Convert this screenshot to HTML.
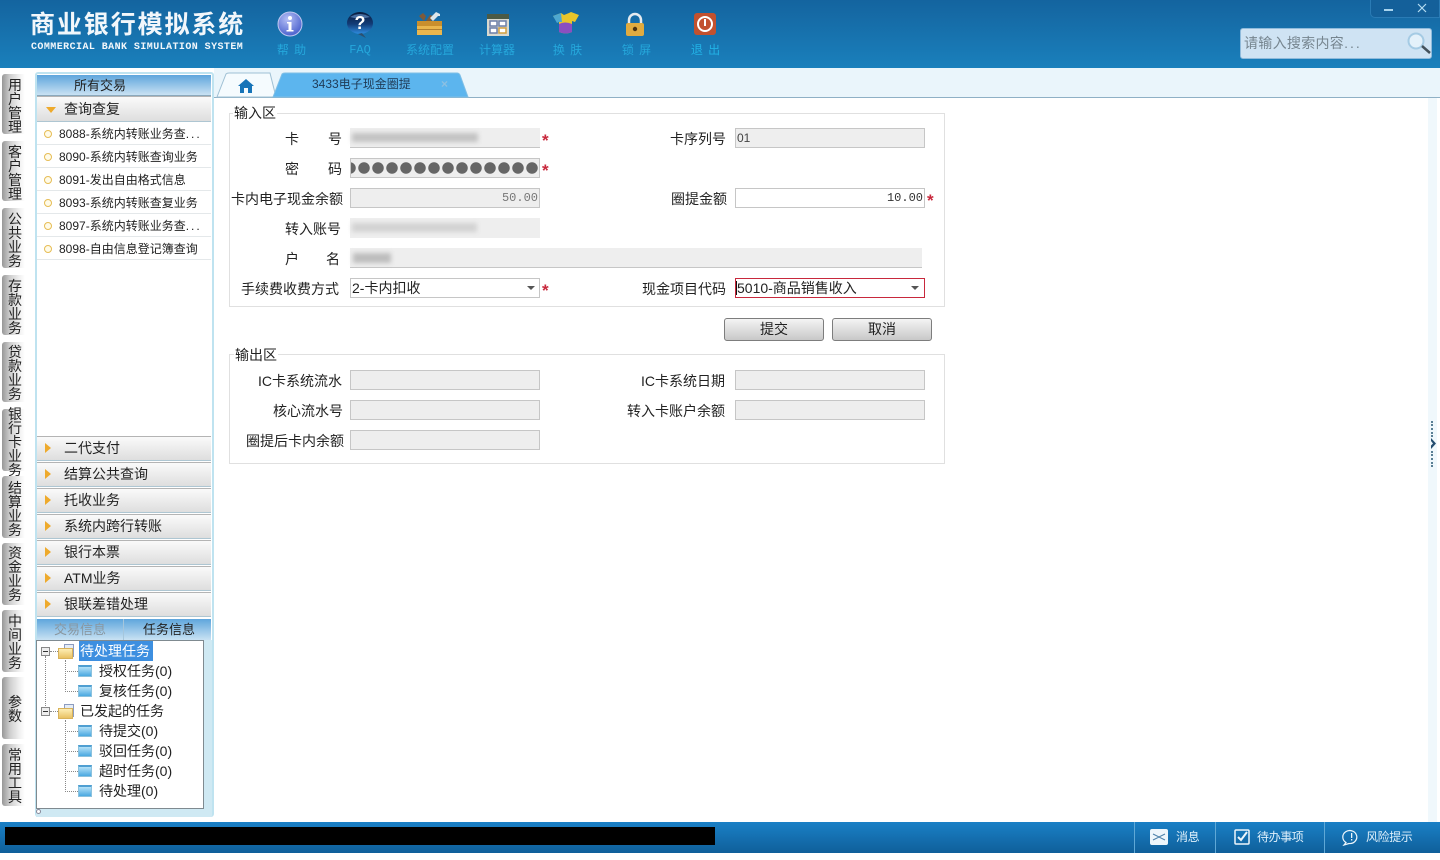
<!DOCTYPE html>
<html lang="zh">
<head>
<meta charset="utf-8">
<title>商业银行模拟系统</title>
<style>
html,body{margin:0;padding:0;width:1440px;height:860px;overflow:hidden;background:#fff}
body{position:relative;font-family:"Liberation Sans","WenQuanYi Zen Hei","Noto Sans CJK SC",sans-serif;font-size:14px;color:#222}
div,span,svg{position:absolute;box-sizing:border-box}
.t{white-space:nowrap;line-height:20px}
#hd{left:0;top:0;width:1440px;height:68px;background:linear-gradient(#14649f,#1a80bc)}
.nl{top:42px;width:70px;text-align:center;color:#25a8dc;font-size:12px;line-height:16px;white-space:nowrap}
.sp{letter-spacing:1px}
.side{left:2px;width:23px;background:linear-gradient(90deg,#979797,#cfcfcf 35%,#f0f0f0 75%,#fff);border-radius:3px 0 0 3px;text-align:center;line-height:14px;font-size:14px;color:#222}
.side span{left:6px;width:14px;display:block;word-break:break-all}
.acc{left:37px;width:174px;height:24px;background:linear-gradient(#fafafa,#dedede);border-top:1px solid #b4b4b4;border-bottom:1px solid #aec6d2}
.acc i{position:absolute;left:27px;top:0;font-style:normal;font-size:14px;line-height:22px;white-space:nowrap;color:#222}
.tri{left:8px;top:6px;width:0;height:0;border-left:6px solid #eeaa2c;border-top:5px solid transparent;border-bottom:5px solid transparent}
.itm{left:37px;width:174px;height:23px;border-bottom:1px solid #e4e8ea;font-size:12px;line-height:22px;white-space:nowrap;color:#222}
.itm i{position:absolute;left:22px;top:1px;font-style:normal}
.itm u{text-decoration:none;letter-spacing:2px}
.itm b{position:absolute;left:7px;top:8px;width:6px;height:6px;border:1px solid #e6bd55;border-radius:50%;background:#fffbe8}
.l{white-space:nowrap;text-align:right;line-height:20px;font-size:14px;color:#222;margin-top:1px}
.f{width:190px;height:20px;background:#eee;border:1px solid #c6c6c6;font-size:12px;line-height:19px;color:#555;white-space:nowrap}
.nb{border:none;background:#eee}
.st{color:#c8283c;font-size:17px;line-height:20px;font-weight:bold;margin:2px 0 0 0}
.blur{background:#c2c2c2;filter:blur(2.5px);height:9px}
.btn{width:100px;height:23px;top:318px;border:1px solid #7d7d7d;border-radius:3px;background:linear-gradient(#f4f4f4,#c8c8c8);text-align:center;line-height:21px;font-size:14px;color:#222}
.arr{width:0;height:0;border-left:4px solid transparent;border-right:4px solid transparent;border-top:4px solid #555}
.fs{border:1px solid #e0e0e0;background:#fff}
.leg{background:#fff;padding:0 1px;line-height:16px;font-size:14px;white-space:nowrap;color:#222}
.tr{font-size:14px;line-height:20px;white-space:nowrap;color:#222}
.fold{width:14px;height:12px;background:linear-gradient(#b5e2f8,#4aa8e0);border:1px solid #8cc2de;border-top:2px solid #4f9fd2}
.ofold{width:15px;height:11px;background:linear-gradient(#fdeeb5,#e9c264);border:1px solid #d8b25a}
.pg{width:10px;height:13px;background:#e4ecf6;border:1px solid #8c9cc0}
.pm{width:9px;height:9px;border:1px solid #888;background:#eee}
.pm:after{content:"";position:absolute;left:1px;top:3px;width:5px;height:1px;background:#333}
.dv{border-left:1px dotted #888;width:0}
.dh{border-top:1px dotted #888;height:0}
.bt{top:829px;color:#dff0fb;font-size:12px;line-height:16px;white-space:nowrap;letter-spacing:-.4px}
.sep{top:822px;width:1px;height:31px;background:#5fa8d6}
</style>
</head>
<body>
<div id="hd"></div>
<div class="t" style="left:30px;top:10px;font-size:25px;line-height:30px;letter-spacing:1.9px;color:#f2f7fb;font-weight:bold">商业银行模拟系统</div>
<div class="t" style="left:31px;top:41px;font-family:'Liberation Mono',monospace;font-size:10px;line-height:14px;font-weight:bold;color:#f2f7fb;letter-spacing:.43px">COMMERCIAL BANK SIMULATION SYSTEM</div>

<svg style="left:276px;top:10px" width="28" height="28" viewBox="0 0 28 28"><defs><radialGradient id="g1" cx=".4" cy=".3" r=".8"><stop offset="0" stop-color="#b4bff5"/><stop offset="1" stop-color="#3d55c8"/></radialGradient><linearGradient id="g2" x1="0" y1="0" x2="0" y2="1"><stop offset="0" stop-color="#0a1c3c"/><stop offset=".55" stop-color="#123c78"/><stop offset="1" stop-color="#2f8de0"/></linearGradient></defs><circle cx="14" cy="14" r="12" fill="url(#g1)" stroke="#c0c8f0"/><circle cx="14" cy="8" r="2" fill="#fff"/><path d="M11 12h4.500v8h2v1.500h-7v-1.500h2v-6.500h-1.500z" fill="#fff"/></svg>
<svg style="left:346px;top:11px" width="28" height="28" viewBox="0 0 28 28"><ellipse cx="14" cy="12" rx="13" ry="11" fill="url(#g2)"/><path d="M16 22l4 5-8-4z" fill="#2c5070"/><path d="M4 6q10-6 20 0-10 3-20 0z" fill="#6f9fd8" opacity=".6"/><text x="14" y="18" font-size="18" font-weight="bold" fill="#fff" text-anchor="middle" font-family="Liberation Sans">?</text></svg>
<svg style="left:415px;top:9px" width="28" height="28" viewBox="0 0 28 28"><path d="M4 7l4-3 3 3-2 5zM11 12l4-6 3 1-2 5z" fill="#7d5a3a"/><path d="M15 9l6-6 4 2 0 2-2 0-5 5z" fill="#dde6ea"/><rect x="2" y="12" width="25" height="14" fill="#e9b64d"/><rect x="2" y="12" width="25" height="5" fill="#c98f2d"/><rect x="2" y="20" width="25" height="1" fill="#b07f2e"/></svg>
<svg style="left:486px;top:12px" width="24" height="24" viewBox="0 0 24 24"><rect x="1" y="2" width="22" height="22" fill="#d9d9cf"/><rect x="1" y="2" width="22" height="5" fill="#4b5a45"/><rect x="4" y="9" width="7" height="5" fill="#fff" stroke="#6c7fa8" stroke-width="1.500"/><rect x="13" y="9" width="7" height="5" fill="#fff" stroke="#6c7fa8" stroke-width="1.500"/><rect x="4" y="16" width="7" height="5" fill="#fff" stroke="#6c7fa8" stroke-width="1.500"/><rect x="13" y="16" width="7" height="5" fill="#fff" stroke="#d0a040" stroke-width="1.500"/></svg>
<svg style="left:552px;top:11px" width="28" height="24" viewBox="0 0 28 24"><path d="M1 5l8-3 3 2 5-2 2-1 8 3-4 7-3-1v11q-6 3-13 0v-11l-2 1z" fill="#e9c52b"/><path d="M1 5l8-3 1 9-3 0-2 1z" fill="#4ea7d0"/><path d="M7 13q6-3 13 0v8q-6 3-13 0z" fill="#8a4fc0"/></svg>
<svg style="left:624px;top:12px" width="22" height="25" viewBox="0 0 22 25"><path d="M5 12V8a6 6 0 0 1 12 0v4" fill="none" stroke="#e4eaef" stroke-width="2.500"/><rect x="2" y="11" width="18" height="13" rx="2" fill="#e0ab3f"/><circle cx="11" cy="17" r="2.200" fill="#4a3210"/></svg>
<svg style="left:693px;top:12px" width="24" height="24" viewBox="0 0 24 24"><rect x="1" y="1" width="22" height="22" rx="3" fill="#c2512f"/><circle cx="12" cy="12" r="7" fill="none" stroke="#fff" stroke-width="2"/><rect x="11" y="7" width="2" height="7" fill="#fff"/></svg>

<div class="nl sp" style="left:257px">帮 助</div>
<div class="nl" style="left:325px;font-family:'Liberation Mono',monospace">FAQ</div>
<div class="nl" style="left:395px">系统配置</div>
<div class="nl" style="left:462px">计算器</div>
<div class="nl sp" style="left:533px">换 肤</div>
<div class="nl sp" style="left:602px">锁 屏</div>
<div class="nl sp" style="left:671px;color:#22b2e6">退 出</div>

<div style="left:1370px;top:0;width:70px;height:18px;background:#14609a;border:1px solid #2a7bb5;border-top:none;border-radius:0 0 0 5px"></div>
<div style="left:1384px;top:9px;width:9px;height:2px;background:#a8d4ee"></div>
<svg style="left:1417px;top:3px" width="10" height="10" viewBox="0 0 10 10"><path d="M1 1l8 8M9 1l-8 8" stroke="#b5dcf2" stroke-width="1.200"/></svg>

<div style="left:1240px;top:28px;width:192px;height:31px;background:#cfe3f3;border-radius:3px;border:1px solid #8fbbdc"></div>
<div class="t" style="left:1244px;top:33px;font-size:14px;color:#76858f;letter-spacing:.3px">请输入搜索内容<span style="position:static;letter-spacing:2px">...</span></div>
<svg style="left:1404px;top:30px" width="28" height="26" viewBox="0 0 28 26"><circle cx="12" cy="11" r="7.500" fill="#e4f1fa" stroke="#a5cbe4" stroke-width="2"/><path d="M18 16l8 7" stroke="#44525c" stroke-width="2.500"/></svg>

<!-- tab strip -->
<div style="left:214px;top:68px;width:1226px;height:30px;background:#eaf5fb;border-bottom:1px solid #8fb0c5"></div>
<svg style="left:216px;top:72px" width="256" height="26" viewBox="0 0 256 26"><path d="M1 25L10 2q1-1 3-1h41l6 24z" fill="#f5fbfe" stroke="#9fc0d4"/><path d="M57 25L66 2q1-1 3-1h172q2 0 3 2l8 22z" fill="#5cb5ee" stroke="#7fbfe6"/></svg>
<svg style="left:237px;top:78px" width="18" height="16" viewBox="0 0 18 16"><path d="M9 1L1 8h2v7h4v-5h4v5h4V8h2z" fill="#1674b8"/></svg>
<div class="t" style="left:312px;top:74px;font-size:12px;color:#1f3a55">3433电子现金圈提</div>
<div class="t" style="left:441px;top:74px;font-size:12px;color:#8cc0e2;font-weight:bold">×</div>

<!-- side tabs -->
<div class="side" style="top:74px;height:60px"><span style="top:4px">用户管理</span></div>
<div class="side" style="top:141px;height:60px"><span style="top:4px">客户管理</span></div>
<div class="side" style="top:208px;height:60px"><span style="top:4px">公共业务</span></div>
<div class="side" style="top:275px;height:60px"><span style="top:4px">存款业务</span></div>
<div class="side" style="top:342px;height:60px"><span style="top:3px">贷款业务</span></div>
<div class="side" style="top:409px;height:62px"><span style="top:-2px">银行卡业务</span></div>
<div class="side" style="top:476px;height:62px"><span style="top:5px">结算业务</span></div>
<div class="side" style="top:543px;height:62px"><span style="top:3px">资金业务</span></div>
<div class="side" style="top:610px;height:62px"><span style="top:4px">中间业务</span></div>
<div class="side" style="top:677px;height:62px"><span style="top:18px">参数</span></div>
<div class="side" style="top:744px;height:62px"><span style="top:4px">常用工具</span></div>

<!-- left panel -->
<div style="left:35px;top:72px;width:179px;height:745px;background:#fff;border:2px solid #bfe3f0;border-radius:3px"></div>
<div style="left:37px;top:75px;width:174px;height:21px;background:linear-gradient(#5ea6dc,#c9e2f3);border-bottom:1px solid #8aa9bd"></div>
<div class="t" style="left:74px;top:75px;font-size:13px;line-height:21px">所有交易</div>
<div class="acc" style="top:96px;height:26px"><div style="left:9px;top:10px;width:0;height:0;border-top:6px solid #eeaa2c;border-left:5px solid transparent;border-right:5px solid transparent"></div><i style="top:1px">查询查复</i></div>
<div class="itm" style="top:122px"><b></b><i>8088-系统内转账业务查<u>...</u></i></div>
<div class="itm" style="top:145px"><b></b><i>8090-系统内转账查询业务</i></div>
<div class="itm" style="top:168px"><b></b><i>8091-发出自由格式信息</i></div>
<div class="itm" style="top:191px"><b></b><i>8093-系统内转账查复业务</i></div>
<div class="itm" style="top:214px"><b></b><i>8097-系统内转账业务查<u>...</u></i></div>
<div class="itm" style="top:237px"><b></b><i>8098-自由信息登记簿查询</i></div>

<div class="acc" style="top:436px;height:25px"><div class="tri"></div><i>二代支付</i></div>
<div class="acc" style="top:462px;height:25px"><div class="tri"></div><i>结算公共查询</i></div>
<div class="acc" style="top:488px;height:25px"><div class="tri"></div><i>托收业务</i></div>
<div class="acc" style="top:514px;height:25px"><div class="tri"></div><i>系统内跨行转账</i></div>
<div class="acc" style="top:540px;height:25px"><div class="tri"></div><i>银行本票</i></div>
<div class="acc" style="top:566px;height:25px"><div class="tri"></div><i>ATM业务</i></div>
<div class="acc" style="top:592px;height:25px"><div class="tri"></div><i>银联差错处理</i></div>

<div style="left:37px;top:619px;width:174px;height:21px;background:linear-gradient(#5ea6dc,#c9e2f3)"></div>
<div style="left:123px;top:619px;width:1px;height:21px;background:#a5c6dc"></div>
<div class="t" style="left:54px;top:620px;font-size:13px;color:#8a97a0">交易信息</div>
<div class="t" style="left:143px;top:620px;font-size:13px">任务信息</div>
<div style="left:36px;top:640px;width:168px;height:169px;background:#fff;border:1px solid #7f8a90"></div>
<div style="left:204px;top:640px;width:8px;height:176px;background:#cfe9f3"></div>
<div style="left:36px;top:809px;width:176px;height:8px;background:#cfe9f3"></div>
<div style="left:36px;top:809px;width:5px;height:5px;border:1px solid #889;border-radius:50%;background:#fff"></div>

<div class="dv" style="left:45px;top:656px;height:56px"></div>
<div class="dv" style="left:65px;top:660px;height:32px"></div>
<div class="dv" style="left:65px;top:720px;height:72px"></div>
<div class="dh" style="left:50px;top:651px;width:8px"></div>
<div class="dh" style="left:50px;top:711px;width:8px"></div>
<div class="dh" style="left:65px;top:671px;width:13px"></div>
<div class="dh" style="left:65px;top:691px;width:13px"></div>
<div class="dh" style="left:65px;top:731px;width:13px"></div>
<div class="dh" style="left:65px;top:751px;width:13px"></div>
<div class="dh" style="left:65px;top:771px;width:13px"></div>
<div class="dh" style="left:65px;top:791px;width:13px"></div>
<div class="pm" style="left:41px;top:647px"></div>
<div class="pm" style="left:41px;top:707px"></div>
<div class="pg" style="left:64px;top:644px"></div>
<div class="ofold" style="left:58px;top:648px"></div>
<div class="pg" style="left:64px;top:704px"></div>
<div class="ofold" style="left:58px;top:708px"></div>
<div style="left:79px;top:641px;width:74px;height:20px;background:#3d8fe0"></div>
<div class="tr" style="left:80px;top:641px;color:#fff">待处理任务</div>
<div class="fold" style="left:78px;top:665px"></div><div class="tr" style="left:99px;top:661px">授权任务(0)</div>
<div class="fold" style="left:78px;top:685px"></div><div class="tr" style="left:99px;top:681px">复核任务(0)</div>
<div class="tr" style="left:80px;top:701px">已发起的任务</div>
<div class="fold" style="left:78px;top:725px"></div><div class="tr" style="left:99px;top:721px">待提交(0)</div>
<div class="fold" style="left:78px;top:745px"></div><div class="tr" style="left:99px;top:741px">驳回任务(0)</div>
<div class="fold" style="left:78px;top:765px"></div><div class="tr" style="left:99px;top:761px">超时任务(0)</div>
<div class="fold" style="left:78px;top:785px"></div><div class="tr" style="left:99px;top:781px">待处理(0)</div>

<!-- input fieldset -->
<div class="fs" style="left:229px;top:113px;width:716px;height:194px"></div>
<div class="leg" style="left:233px;top:105px">输入区</div>

<div class="l" style="left:285px;top:128px;width:57px;text-align:justify;text-align-last:justify">卡 号</div>
<div class="f nb" style="left:350px;top:128px;border-bottom:1px solid #c6c6c6"></div><div class="blur" style="left:352px;top:133px;width:126px"></div><div class="st" style="left:542px;top:129px">*</div>
<div class="l" style="left:285px;top:158px;width:57px;text-align:justify;text-align-last:justify">密 码</div>
<div class="f" style="left:350px;top:158px;background:#eee radial-gradient(circle at 7px 9px,#666 5.500px,transparent 6px) -8px 0/14px 20px repeat-x"></div><div class="st" style="left:542px;top:159px">*</div>
<div class="l" style="left:228px;top:188px;width:115px">卡内电子现金余额</div>
<div class="f" style="left:350px;top:188px;text-align:right;padding-right:1px;color:#777;font-family:'Liberation Mono',monospace;letter-spacing:0">50.00</div>
<div class="l" style="left:284px;top:218px;width:57px">转入账号</div>
<div class="f nb" style="left:350px;top:218px"></div><div class="blur" style="left:352px;top:223px;width:125px;background:#d2d2d2"></div>
<div class="l" style="left:285px;top:248px;width:55px;text-align:justify;text-align-last:justify">户 名</div>
<div class="f nb" style="left:350px;top:248px;width:572px;border-bottom:1px solid #c6c6c6"></div><div class="blur" style="left:353px;top:253px;width:38px;height:10px;background:#bdbdbd"></div>
<div class="l" style="left:228px;top:278px;width:111px">手续费收费方式</div>
<div class="f" style="left:350px;top:278px;background:#fff;color:#222;font-size:14px;padding-left:1px">2-卡内扣收</div><div class="arr" style="left:527px;top:286px"></div><div class="st" style="left:542px;top:279px">*</div>

<div class="l" style="left:649px;top:128px;width:77px">卡序列号</div>
<div class="f" style="left:735px;top:128px;padding-left:1px;color:#444">01</div>
<div class="l" style="left:650px;top:188px;width:77px">圈提金额</div>
<div class="f" style="left:735px;top:188px;background:#fff;text-align:right;padding-right:1px;color:#333;font-family:'Liberation Mono',monospace">10.00</div><div class="st" style="left:927px;top:189px">*</div>
<div class="l" style="left:629px;top:278px;width:97px">现金项目代码</div>
<div class="f" style="left:735px;top:278px;background:#fff;border:1px solid #c8283c;color:#222;font-size:14px;padding-left:1px">5010-商品销售收入</div><div class="arr" style="left:911px;top:286px"></div>
<div style="left:736px;top:281px;width:1px;height:14px;background:#111"></div>

<div class="btn" style="left:724px">提交</div>
<div class="btn" style="left:832px">取消</div>

<!-- output fieldset -->
<div class="fs" style="left:229px;top:354px;width:716px;height:110px"></div>
<div class="leg" style="left:234px;top:347px">输出区</div>
<div class="l" style="left:229px;top:370px;width:113px">IC卡系统流水</div>
<div class="f" style="left:350px;top:370px"></div>
<div class="l" style="left:228px;top:400px;width:115px">核心流水号</div>
<div class="f" style="left:350px;top:400px"></div>
<div class="l" style="left:229px;top:430px;width:115px">圈提后卡内余额</div>
<div class="f" style="left:350px;top:430px"></div>
<div class="l" style="left:620px;top:370px;width:105px">IC卡系统日期</div>
<div class="f" style="left:735px;top:370px"></div>
<div class="l" style="left:610px;top:400px;width:115px">转入卡账户余额</div>
<div class="f" style="left:735px;top:400px"></div>

<!-- right handle -->
<div style="left:1428px;top:98px;width:9px;height:724px;background:#f0f8fc"></div>
<div style="left:1431px;top:421px;width:2px;height:16px;border-left:2px dotted #5a7f94"></div>
<div style="left:1431px;top:451px;width:2px;height:16px;border-left:2px dotted #5a7f94"></div>
<svg style="left:1430px;top:438px" width="7" height="11" viewBox="0 0 7 11"><path d="M1 0l5 5.500-5 5.500V7.500L3 5.500 1 3z" fill="#234d70"/></svg>

<!-- footer -->
<div style="left:0;top:822px;width:1440px;height:31px;background:linear-gradient(#1a80c6,#0f5f9a)"></div>
<div style="left:5px;top:827px;width:710px;height:18px;background:#000"></div>
<div class="sep" style="left:1134px"></div>
<div class="sep" style="left:1215px"></div>
<div class="sep" style="left:1324px"></div>
<svg style="left:1150px;top:829px" width="18" height="16" viewBox="0 0 18 16"><rect width="18" height="16" rx="2" fill="#eef6fb"/><path d="M3 5l6 3 6-3M3 11l6-3 6 3" fill="none" stroke="#4a7fa8"/></svg>
<svg style="left:1234px;top:829px" width="16" height="16" viewBox="0 0 16 16"><rect x="1" y="1" width="14" height="14" rx="1" fill="none" stroke="#eef6fb" stroke-width="1.500"/><path d="M4 8l3 3 6-8" fill="none" stroke="#eef6fb" stroke-width="2"/></svg>
<svg style="left:1342px;top:829px" width="18" height="17" viewBox="0 0 18 17"><path d="M4 13.500A7 6.500 0 1 1 7 14.500L2 16z" fill="none" stroke="#eef6fb" stroke-width="1.200"/><rect x="9" y="4" width="1.300" height="5" fill="#eef6fb"/><rect x="9" y="10" width="1.300" height="1.500" fill="#eef6fb"/></svg>
<div class="bt" style="left:1176px">消息</div>
<div class="bt" style="left:1257px">待办事项</div>
<div class="bt" style="left:1366px">风险提示</div>
</body>
</html>
